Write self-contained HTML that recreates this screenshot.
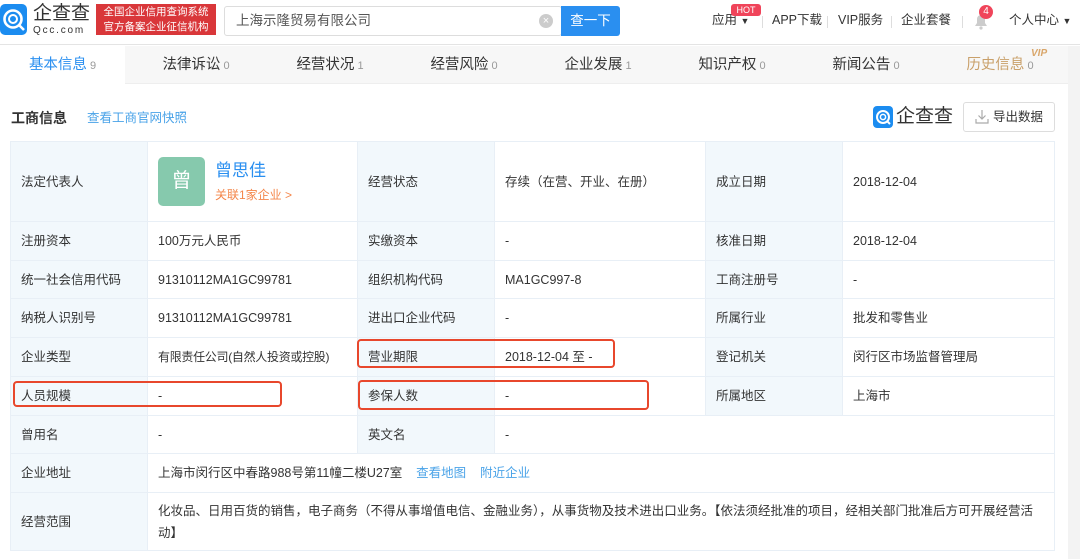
<!DOCTYPE html>
<html><head><meta charset="utf-8"><style>
*{margin:0;padding:0;box-sizing:border-box}
body{width:1080px;height:559px;overflow:hidden;background:#fff;font-family:"Liberation Sans","Noto Sans CJK SC",sans-serif;color:#333;font-size:13px;position:relative}
.abs{position:absolute;white-space:nowrap}
.hdr{left:0;top:0;width:1080px;height:45px;border-bottom:1px solid #e4e4e4;background:#fff}
.tabs{left:0;top:46px;width:1068px;height:38px;background:#f7f7f7;border-bottom:1px solid #eee}
.tab{position:absolute;top:0;height:38px;width:134px;text-align:center;line-height:38px;font-size:14.5px;color:#333}
.tab small{font-size:11px;color:#999;margin-left:3px}
.side{left:1068px;top:46px;width:12px;height:513px;background:#f3f3f3}
table{position:absolute;left:10px;top:141px;width:1044px;border-collapse:collapse;table-layout:fixed}
td{border:1px solid #e8eff6;padding:0 10px;font-size:12.5px;line-height:18px;color:#333;vertical-align:middle;white-space:nowrap}
td.l{background:#f2f8fc;color:#333}
.red{position:absolute;border:2px solid #e8472c;border-radius:4px}
a{color:#4aa3e8;text-decoration:none}
</style></head><body>
<div class="abs hdr"></div>
<div class="abs" style="left:0;top:4px;width:27px;height:31px;background:#1b8cf0;border-radius:5px"></div>
<svg class="abs" style="left:0;top:4px" width="27" height="31" viewBox="0 0 27 31"><circle cx="13" cy="15" r="8.5" fill="none" stroke="#fff" stroke-width="2.6"/><circle cx="13" cy="15" r="4" fill="none" stroke="#fff" stroke-width="2"/><path d="M19 21l5 5" stroke="#fff" stroke-width="2.6"/></svg>
<div class="abs" style="left:33px;top:3px;font-size:19px;line-height:22px;color:#333">企查查</div>
<div class="abs" style="left:33px;top:25px;font-size:10px;color:#333;letter-spacing:1.8px">Qcc.com</div>
<div class="abs" style="left:96px;top:4px;width:120px;height:31px;background:#d9373a;color:#fff;font-size:10.5px;line-height:14.5px;text-align:center;padding-top:1px">全国企业信用查询系统<br>官方备案企业征信机构</div>
<div class="abs" style="left:224px;top:6px;width:338px;height:30px;border:1px solid #ddd;border-radius:3px"></div>
<div class="abs" style="left:236px;top:13px;font-size:13.5px;line-height:16px;color:#555">上海示隆贸易有限公司</div>
<div class="abs" style="left:539px;top:14px;width:14px;height:14px;border-radius:7px;background:#ccc;color:#fff;font-size:11px;line-height:14px;text-align:center">×</div>
<div class="abs" style="left:561px;top:6px;width:59px;height:30px;background:#2a8ff0;border-radius:0 3px 3px 0;color:#fff;font-size:13.5px;line-height:30px;text-align:center">查一下</div>
<div class="abs" style="left:712px;top:12px;font-size:12.5px;line-height:16px;color:#333">应用 <span style="font-size:9px">▼</span></div>
<div class="abs" style="left:731px;top:4px;width:30px;height:12px;background:#f0445a;border-radius:3px;color:#fff;font-size:9px;line-height:12px;text-align:center">HOT</div>
<div class="abs" style="left:772px;top:12px;font-size:12.5px;line-height:16px;color:#333">APP下载</div>
<div class="abs" style="left:838px;top:12px;font-size:12.5px;line-height:16px;color:#333">VIP服务</div>
<div class="abs" style="left:901px;top:12px;font-size:12.5px;line-height:16px;color:#333">企业套餐</div>
<div class="abs" style="left:762px;top:16px;width:1px;height:12px;background:#ddd"></div>
<div class="abs" style="left:827px;top:16px;width:1px;height:12px;background:#ddd"></div>
<div class="abs" style="left:891px;top:16px;width:1px;height:12px;background:#ddd"></div>
<div class="abs" style="left:962px;top:16px;width:1px;height:12px;background:#ddd"></div>
<svg class="abs" style="left:972px;top:12px" width="18" height="18" viewBox="0 0 18 18"><path d="M3 14h12l-2-3V7a4 4 0 0 0-8 0v4z" fill="#ccc"/><circle cx="9" cy="16" r="1.6" fill="#ccc"/></svg>
<div class="abs" style="left:979px;top:5px;width:14px;height:14px;border-radius:7px;background:#f0445a;color:#fff;font-size:10px;line-height:14px;text-align:center">4</div>
<div class="abs" style="left:1009px;top:12px;font-size:12.5px;line-height:16px;color:#333">个人中心 <span style="font-size:9px">▼</span></div>
<div class="abs tabs">
<div class="tab" style="left:0;width:125px;background:#fff;color:#2a8ff0">基本信息<small>9</small></div>
<div class="tab" style="left:129px">法律诉讼<small>0</small></div>
<div class="tab" style="left:263px">经营状况<small>1</small></div>
<div class="tab" style="left:397px">经营风险<small>0</small></div>
<div class="tab" style="left:531px">企业发展<small>1</small></div>
<div class="tab" style="left:665px">知识产权<small>0</small></div>
<div class="tab" style="left:799px">新闻公告<small>0</small></div>
<div class="tab" style="left:933px;color:#c9a06a">历史信息<small>0</small></div>
<div class="abs" style="left:1031px;top:2px;font-size:10px;font-weight:bold;font-style:italic;color:#d9a66a">VIP</div>
</div>
<div class="abs side"></div>
<div class="abs" style="left:11px;top:109px;font-size:14px;line-height:18px;color:#333;font-weight:bold">工商信息</div>
<div class="abs" style="left:87px;top:110px;font-size:12.5px;line-height:16px;color:#4aa3e8">查看工商官网快照</div>
<div class="abs" style="left:873px;top:106px;width:20px;height:22px;background:#1b8cf0;border-radius:4px"></div>
<svg class="abs" style="left:873px;top:106px" width="20" height="22" viewBox="0 0 20 22"><circle cx="10" cy="11" r="6" fill="none" stroke="#fff" stroke-width="2"/><circle cx="10" cy="11" r="2.6" fill="none" stroke="#fff" stroke-width="1.5"/><path d="M14 15l3 3" stroke="#fff" stroke-width="2"/></svg>
<div class="abs" style="left:896px;top:105px;font-size:19px;line-height:24px;color:#333">企查查</div>
<div class="abs" style="left:963px;top:102px;width:92px;height:30px;border:1px solid #ddd;border-radius:3px;background:#fff"></div>
<svg class="abs" style="left:975px;top:109px" width="14" height="15" viewBox="0 0 14 15"><path d="M7 1v9M3.5 6.5L7 10l3.5-3.5M1 10v4h12v-4" fill="none" stroke="#aaa" stroke-width="1.2"/></svg>
<div class="abs" style="left:993px;top:109px;font-size:12.5px;line-height:16px;color:#333">导出数据</div>
<table>
<colgroup><col style="width:137px"><col style="width:210px"><col style="width:137px"><col style="width:211px"><col style="width:137px"><col style="width:212px"></colgroup>
<tr style="height:80px"><td class="l">法定代表人</td><td style="position:relative">
<div style="position:absolute;left:10px;top:15px;width:47px;height:49px;background:#86c9ad;border-radius:5px;color:#fff;font-size:20px;line-height:49px;text-align:center">曾</div>
<div style="position:absolute;left:67px;top:18px;font-size:17px;line-height:22px;color:#2a8ff0">曾思佳</div>
<div style="position:absolute;left:67px;top:45px;font-size:12px;line-height:16px;color:#f4864a">关联1家企业 &gt;</div>
</td><td class="l">经营状态</td><td>存续（在营、开业、在册）</td><td class="l">成立日期</td><td>2018-12-04</td></tr>
<tr style="height:39px"><td class="l">注册资本</td><td>100万元人民币</td><td class="l">实缴资本</td><td>-</td><td class="l">核准日期</td><td>2018-12-04</td></tr>
<tr style="height:38px"><td class="l">统一社会信用代码</td><td>91310112MA1GC99781</td><td class="l">组织机构代码</td><td>MA1GC997-8</td><td class="l">工商注册号</td><td>-</td></tr>
<tr style="height:39px"><td class="l">纳税人识别号</td><td>91310112MA1GC99781</td><td class="l">进出口企业代码</td><td>-</td><td class="l">所属行业</td><td>批发和零售业</td></tr>
<tr style="height:39px"><td class="l">企业类型</td><td style="font-size:12px;letter-spacing:-0.3px">有限责任公司(自然人投资或控股)</td><td class="l">营业期限</td><td>2018-12-04 至 -</td><td class="l">登记机关</td><td>闵行区市场监督管理局</td></tr>
<tr style="height:39px"><td class="l">人员规模</td><td>-</td><td class="l">参保人数</td><td>-</td><td class="l">所属地区</td><td>上海市</td></tr>
<tr style="height:38px"><td class="l">曾用名</td><td>-</td><td class="l">英文名</td><td colspan="3">-</td></tr>
<tr style="height:39px"><td class="l">企业地址</td><td colspan="5">上海市闵行区中春路988号第11幢二楼U27室&nbsp;&nbsp;&nbsp;&nbsp;<a>查看地图</a>&nbsp;&nbsp;&nbsp;&nbsp;<a>附近企业</a></td></tr>
<tr style="height:58px"><td class="l">经营范围</td><td colspan="5" style="line-height:22px;white-space:normal;font-size:12.5px">化妆品、日用百货的销售，电子商务（不得从事增值电信、金融业务），从事货物及技术进出口业务。【依法须经批准的项目，经相关部门批准后方可开展经营活<br>动】</td></tr>
</table>
<div class="red" style="left:357px;top:339px;width:258px;height:29px"></div>
<div class="red" style="left:13px;top:381px;width:269px;height:26px"></div>
<div class="red" style="left:358px;top:380px;width:291px;height:30px"></div>
</body></html>
